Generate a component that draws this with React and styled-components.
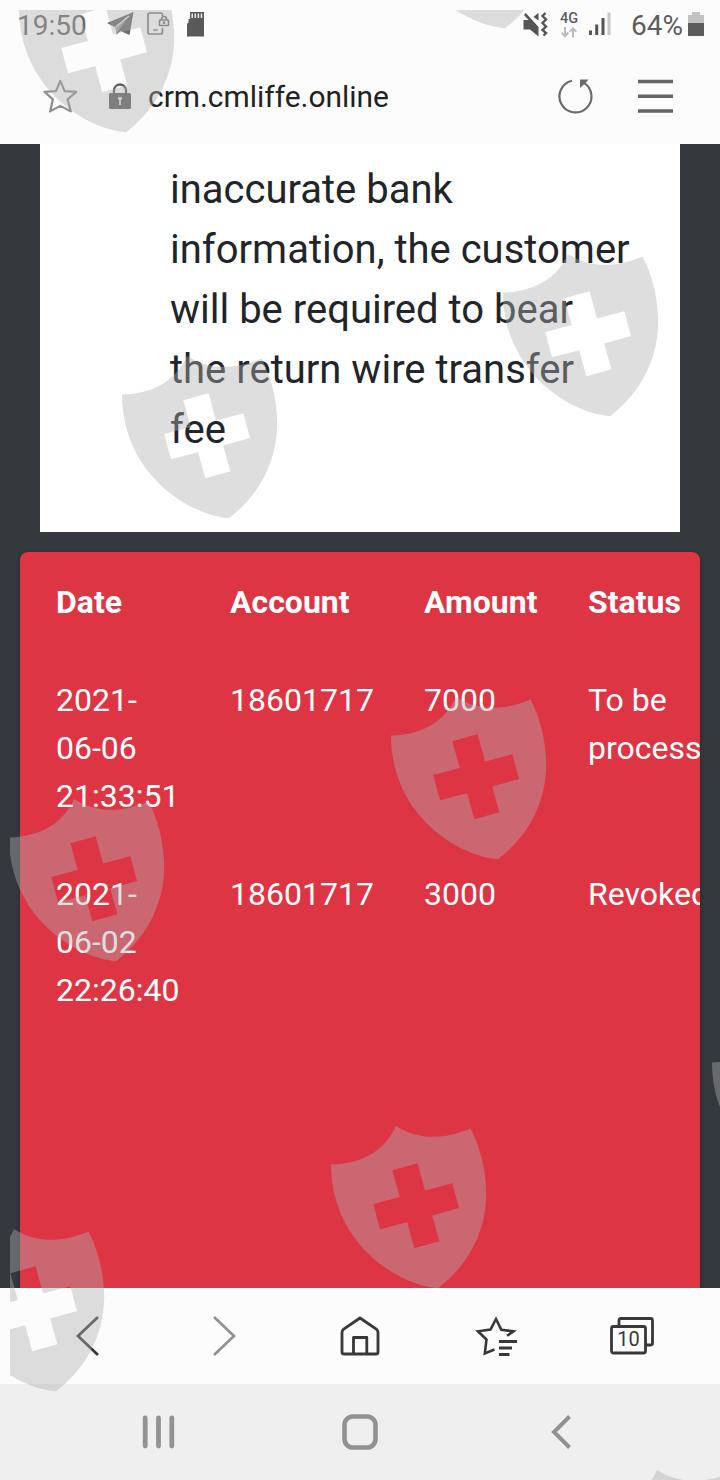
import React from "react";
import styled, { createGlobalStyle } from "styled-components";

const shields = [
  { id: "1", x: 19, y: -30.5 },
  { id: "2", x: 397.5, y: -134.5 },
  { id: "3", x: 502.5, y: 254 },
  { id: "4", x: 121.5, y: 355.5 },
  { id: "5", x: 391, y: 696.5 },
  { id: "6", x: 9, y: 799 },
  { id: "7", x: 712, y: 1024 },
  { id: "8", x: 331, y: 1126 },
  { id: "9", x: -51, y: 1229 },
  { id: "10", x: 592, y: 1470 },
];

const requests = [
  {
    id: "1",
    date: "2021-06-06 21:33:51",
    account: "18601717",
    amount: "7000",
    status: "To be processed",
  },
  {
    id: "2",
    date: "2021-06-02 22:26:40",
    account: "18601717",
    amount: "3000",
    status: "Revoked",
  },
];

const StatusIcons = () => (
  <StatusBar>
    <Clock>19:50</Clock>
    <Icon $left={19} width="27" height="24" viewBox="0 0 27 24">
      <path d="M0 11 26.500 0 22.500 23 13.500 19 9.500 22.500 8.500 15.500Z" fill="#6a6a6a" />
      <path d="M8.500 15.500 22 4 12 17.500 9.500 22.500Z" fill="#a5a5a5" />
      <path d="M8.500 15 22 4" stroke="#e3e3e3" strokeWidth="1.400" />
    </Icon>
    <Icon $left={13} width="23" height="24" viewBox="0 0 23 24" fill="none" stroke="#757575" strokeWidth="1.700">
      <path d="M15.500 4V3a2 2 0 0 0-2-2H3a2 2 0 0 0-2 2v17a2 2 0 0 0 2 2h10.500a2 2 0 0 0 2-2v-4M6.500 18h4" />
      <rect x="12.500" y="8" width="9" height="5.500" rx="0.800" />
      <path d="M14.500 8V7a2.500 2.500 0 0 1 5 0v1" />
      <circle cx="17" cy="10.700" r="0.600" />
    </Icon>
    <Icon $left={17} width="17" height="25" viewBox="0 0 17 25">
      <path d="M3 0h14v24.500H0V12l1.500-1.500V7H3Z" fill="#595959" />
      <path d="M5.200 1.500v4.500M8.300 1.500v4.500M11.400 1.500v4.500M14.500 1.500v4.500" stroke="#eee" strokeWidth="1.500" />
    </Icon>
    <Spacer />
    <Icon width="25" height="25" viewBox="0 0 25 25" fill="#555">
      <path d="M2.800 1 15.500 15V24.500L7 17.500H0.500V8H5.500L1 3ZM10.500 5 15.500 0.800V8.500Z" />
      <path d="m22.500 1-3 3 3.500 3.500-3.500 3.500 3.500 3.500-3.500 3.500 3.500 3-2.500 2.500" fill="none" stroke="#555" strokeWidth="2.400" />
    </Icon>
    <Network>
      4G
      <svg width="16" height="11" viewBox="0 0 16 11" fill="none" stroke="#bbb" strokeWidth="2">
        <path d="M4 0v9M.700 5.800 4 9.200l3.300-3.400M12 10.500v-9M8.700 4.800 12 1.400l3.300 3.400" />
      </svg>
    </Network>
    <Icon $left={10} width="22" height="24" viewBox="0 0 22 24">
      <path d="M0 18.500h3V23H0ZM6.200 12.500h3V23h-3ZM12.500 6h3v17h-3Z" fill="#555" />
      <path d="M18.500 0.500h3V23h-3Z" fill="#c8c8c8" />
    </Icon>
    <Percent>64%</Percent>
    <Icon $left={5} width="16" height="24" viewBox="0 0 16 24">
      <path d="M4 0h8v3h4v8H0V3h4Z" fill="#c1c1c1" />
      <path d="M0 11h16v13H0Z" fill="#5c5c5c" />
    </Icon>
  </StatusBar>
);

const Address = () => (
  <AddressBar>
    <Icon width="35" height="35" viewBox="0 0 35 35" fill="none" stroke="#8e8e8e" strokeWidth="2.200" strokeLinejoin="round">
      <path d="m17.300 1.800 4.300 10.300 11.700.700-8.800 7.600 3.300 12-10.500-5.500-10.200 5.500 2.700-12-8.300-7.600 11.500-.700Z" />
    </Icon>
    <Icon $left={31} width="22" height="27" viewBox="0 0 22 27">
      <path d="M5 11V7.500a6 6 0 0 1 12 0V11" fill="none" stroke="#5e5e5e" strokeWidth="2.300" />
      <rect y="10" width="22" height="16" rx="1.500" fill="#5e5e5e" />
      <path d="M11 16v6" stroke="#ddd" strokeWidth="1.800" />
      <circle cx="11" cy="15.500" r="2" fill="#ddd" />
    </Icon>
    <Url>crm.cmliffe.online</Url>
    <Spacer />
    <Icon width="36" height="36" viewBox="0 0 36 36" fill="none">
      <path d="M14 2.800A16 16 0 1 0 25.500 4.600" stroke="#6b6b6b" strokeWidth="2.200" />
      <path d="M22 1.500h8.500l-3.500 4-5 4.500Z" fill="#6b6b6b" />
    </Icon>
    <Icon $left={44} width="35" height="34" viewBox="0 0 35 34">
      <path d="M0 2.500h35M0 17.300h35M0 32h35" stroke="#666" strokeWidth="3.400" />
    </Icon>
  </AddressBar>
);

const Toolbar = () => (
  <BrowserBar>
    <svg width="24" height="42" viewBox="0 0 24 42" fill="none" stroke="#383838" strokeWidth="2.800">
      <path d="M22 2 2 21l20 19" />
    </svg>
    <svg width="24" height="42" viewBox="0 0 24 42" fill="none" stroke="#919191" strokeWidth="2.600">
      <path d="m2 2 20 19L2 40" />
    </svg>
    <svg width="40" height="40" viewBox="0 0 40 40" fill="none" stroke="#383838" strokeWidth="2.800" strokeLinejoin="round">
      <path d="M20 2 3.700 13.200Q2 14.500 2 16.500V36q0 2 2 2h32q2 0 2-2V16.500q0-2-1.700-3.300Z" />
      <path d="M13.500 38V21.500h13.300V38" />
    </svg>
    <svg width="42" height="42" viewBox="0 0 42 42" fill="none" stroke="#383838" strokeWidth="2.600">
      <path d="M19.500 34.500 9.800 38.500l1.700-14L3 16.300l12.500-1.800L21 4l5.300 10.800 12.200 1.500-6.500 4.500" />
      <path d="M24 26.500h18M24 33h13M24 39.500h10.500" strokeWidth="2.800" />
    </svg>
    <Tabs>
      <svg width="44" height="38" viewBox="0 0 44 38" fill="none" stroke="#383838" strokeWidth="2.800">
        <rect x="1.500" y="9.500" width="34" height="26.500" rx="2" />
        <path d="M9 9V3.500q0-2 2-2h29.500q2 0 2 2V26q0 2-2 2h-4.500" />
      </svg>
      <TabCount>10</TabCount>
    </Tabs>
  </BrowserBar>
);

const SystemNav = () => (
  <NavBar>
    <svg width="33" height="34" viewBox="0 0 33 34" stroke="#929292" strokeWidth="4.800" strokeLinecap="round">
      <path d="M3.200 3v28M16.500 3v28M29.800 3v28" />
    </svg>
    <svg width="36" height="36" viewBox="0 0 36 36" fill="none" stroke="#929292" strokeWidth="4.600">
      <rect x="2.500" y="2.500" width="31" height="31" rx="8.500" />
    </svg>
    <svg width="20" height="34" viewBox="0 0 20 34" fill="none" stroke="#929292" strokeWidth="4">
      <path d="M18.500 1.500 3 17l15.500 15.500" />
    </svg>
  </NavBar>
);

const App = () => (
  <Screen>
    <GlobalStyle />
    <StatusIcons />
    <Address />
    <Page>
      <Notice>
        inaccurate bank information, the customer will be required to bear the
        return wire transfer fee
      </Notice>
      <TableCard>
        <Table>
          <thead>
            <tr>
              <HeadCell $width={174}>Date</HeadCell>
              <HeadCell $width={194}>Account</HeadCell>
              <HeadCell $width={164}>Amount</HeadCell>
              <HeadCell $width={216}>Status</HeadCell>
            </tr>
          </thead>
          <tbody>
            {requests.map((r) => (
              <tr key={r.id}>
                <DateCell>{r.date}</DateCell>
                <Cell>{r.account}</Cell>
                <Cell>{r.amount}</Cell>
                <Cell>{r.status}</Cell>
              </tr>
            ))}
          </tbody>
        </Table>
      </TableCard>
    </Page>
    <Toolbar />
    <SystemNav />
    <Watermark>
      {shields.map((s) => (
        <Shield key={s.id} $x={s.x} $y={s.y} width="157" height="164" viewBox="0 0 157 164">
          <path
            fillRule="evenodd"
            d="M0 38.500C30 38 54 25 65 0C87 14 112 14 139.500 2.500C149 21 155 43 155.200 68C155 108 135 141 107 162.300C62 158 0 114 0 38.500Z
              M61.300 44.300 86.600 37.300 94 64.500 121.300 57.300 128 82 101.200 89.500 108.300 115.300 83.300 122.300 76.200 96.200 49 103.300 42.300 78 68.800 71Z"
          />
        </Shield>
      ))}
    </Watermark>
  </Screen>
);

export default App;

const GlobalStyle = createGlobalStyle`
  * {
    box-sizing: border-box;
  }

  body {
    margin: 0;
    font-family: Roboto, "Liberation Sans", sans-serif;
  }

  svg {
    display: block;
    flex-shrink: 0;
  }
`;

const Screen = styled.div`
  position: relative;
  display: flex;
  flex-direction: column;
  width: 720px;
  height: 1480px;
  overflow: hidden;
  background: #fcfcfc;
`;

const StatusBar = styled.div`
  display: flex;
  align-items: center;
  height: 48px;
  padding: 0 16px 0 17px;
  color: #5c5c5c;
`;

const Icon = styled.svg`
  margin-left: ${(props) => props.$left || 0}px;
`;

const Spacer = styled.div`
  flex: 1;
`;

const Clock = styled.span`
  width: 71px;
  padding-top: 3px;
  font-size: 28px;
  line-height: 48px;
  color: #666;
`;

const Network = styled.div`
  display: flex;
  flex-direction: column;
  align-items: center;
  gap: 3px;
  width: 20px;
  margin-left: 11px;
  padding-top: 2px;
  font-size: 14.5px;
  font-weight: 500;
  line-height: 11px;
`;

const Percent = styled.span`
  width: 52px;
  margin-left: 20px;
  padding-top: 3px;
  font-size: 28px;
  line-height: 48px;
`;

const AddressBar = styled.div`
  display: flex;
  align-items: center;
  height: 96px;
  padding: 0 47px 0 43px;
`;

const Url = styled.span`
  margin-left: 17px;
  font-size: 29.900px;
  color: #222;
`;

const Page = styled.div`
  height: 1144px;
  overflow: hidden;
  padding: 0 20px;
  background: #35393e;
`;

const Notice = styled.div`
  height: 388px;
  margin: 0 20px 20px;
  padding: 16px 45px 0 130px;
  background: #fff;
  color: #212529;
  font-size: 40px;
  line-height: 60px;
`;

const TableCard = styled.div`
  height: 800px;
  overflow: hidden;
  padding: 2px 12px;
  border-radius: 8px;
  background: #de3545;
  box-shadow: 0 0 2px rgba(0, 0, 0, 0.125), 0 2px 6px rgba(0, 0, 0, 0.2);
`;

const Table = styled.table`
  width: 748px;
  table-layout: fixed;
  border-collapse: collapse;
  color: #fff;
  font-size: 32px;
  line-height: 48px;
`;

const HeadCell = styled.th`
  width: ${(props) => props.$width}px;
  padding: 24px 24px 26px;
  text-align: left;
  font-weight: 700;
`;

const Cell = styled.td`
  padding: 24px 24px 26px;
  vertical-align: top;
`;

const DateCell = styled(Cell)`
  padding-right: 26px;
`;

const BrowserBar = styled.div`
  display: grid;
  grid-template-columns: repeat(5, 136px);
  place-items: center;
  height: 96px;
  padding: 0 20px;
  background: #fcfcfc;
`;

const Tabs = styled.div`
  position: relative;
`;

const TabCount = styled.span`
  position: absolute;
  top: 10px;
  left: 1px;
  width: 35px;
  text-align: center;
  font-size: 20px;
  line-height: 24px;
  color: #383838;
`;

const NavBar = styled.div`
  display: grid;
  grid-template-columns: repeat(3, 201px);
  place-items: center;
  height: 96px;
  padding: 0 58px;
  background: #efefef;
`;

const Watermark = styled.div`
  position: absolute;
  top: 10px;
  left: 10px;
  right: 0;
  bottom: 0;
  overflow: hidden;
  pointer-events: none;
`;

const Shield = styled.svg`
  position: absolute;
  left: ${(props) => props.$x - 10}px;
  top: ${(props) => props.$y - 10}px;
  fill: rgba(175, 175, 175, 0.41);
`;
